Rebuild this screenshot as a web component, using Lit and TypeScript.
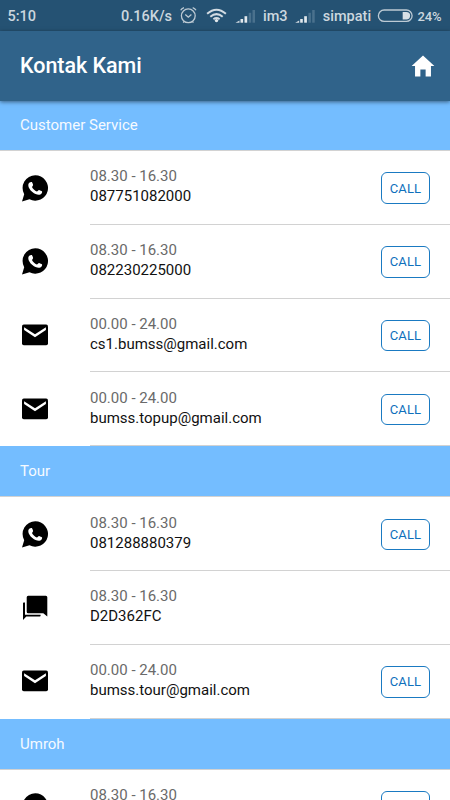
import { LitElement, html, css, svg } from "lit";
import { customElement, property } from "lit/decorators.js";

type Kind = "whatsapp" | "mail" | "chat";
interface Contact { kind: Kind; hours: string; value: string; call: boolean; }
interface Section { title: string; items: Contact[]; }

const entry = (kind: Kind, hours: string, value: string, call = true): Contact => ({ kind, hours, value, call });

const SECTIONS: Section[] = [
  {
    title: "Customer Service",
    items: [
      entry("whatsapp", "08.30 - 16.30", "087751082000"),
      entry("whatsapp", "08.30 - 16.30", "082230225000"),
      entry("mail", "00.00 - 24.00", "cs1.bumss@gmail.com"),
      entry("mail", "00.00 - 24.00", "bumss.topup@gmail.com"),
    ],
  },
  {
    title: "Tour",
    items: [
      entry("whatsapp", "08.30 - 16.30", "081288880379"),
      entry("chat", "08.30 - 16.30", "D2D362FC", false),
      entry("mail", "00.00 - 24.00", "bumss.tour@gmail.com"),
    ],
  },
  { title: "Umroh", items: [entry("whatsapp", "08.30 - 16.30", "")] },
];

const GLYPHS = {
  whatsapp: svg`
    <path d="M15.3 2.3A12.7 12.7 0 0 0 4.2 21.2L2 28.6L9.5 26.3A12.7 12.7 0 1 0 15.3 2.3Z"/>
    <path fill="#fff" d="M9.6 9.6C10.3 8.9 11.4 8.7 11.9 9.1C12.4 9.8 13 11.3 13.1 12C13.1 12.8 12 13.6 12 14.1C12.5 15.7 14.9 17.8 16.8 18.6C17.5 18.7 18.3 17.1 19 17.1C19.7 17.2 21.7 18.2 22.1 18.6C22.4 19.6 21.4 21.1 20.3 21.6C18.1 22.4 15 21.3 12.4 19.1C9.8 16.8 8.3 14.3 8.3 12.2C8.3 11.1 8.9 10.2 9.6 9.6Z"/>`,
  mail: svg`
    <rect x="2" y="4.6" width="26" height="20.7" rx="1.8"/>
    <path fill="#fff" d="M4.1 7.3L15 14.300L25.900 7.300V9.900L15 17.200L4.100 9.900Z"/>`,
  chat: svg`
    <path d="M8.200 2.800H25.800A1.500 1.500 0 0 1 27.300 4.300V23.500L23.300 20.300H8.200A1.500 1.500 0 0 1 6.700 18.800V4.300A1.500 1.500 0 0 1 8.200 2.800Z"/>
    <path d="M3 10Q3 9.500 3.700 9.500H5V21.800H20.600V22.600Q20.600 23.500 19.800 23.500H6.300L3 27Z"/>`,
};

@customElement("contact-row")
export class ContactRow extends LitElement {
  @property({ attribute: false }) contact!: Contact;

  static styles = css`
    :host { display: flex; height: 73.75px; box-sizing: border-box; background: #fff; }
    .media { width: 90px; padding: 21.500px 0 0 20px; box-sizing: border-box; flex: none; }
    .glyph { width: 30px; height: 30px; display: block; }
    .body { flex: 1; display: flex; justify-content: space-between; box-sizing: border-box; border-bottom: 1px solid #d2d2d2; padding-right: 20px; }
    .texts { padding-top: 15.250px; font-size: 15px; line-height: 20px; color: #111; }
    .hours { color: #6a6a6a; }
    .call { margin: 21.300px 0 0; width: 49px; height: 31.500px; box-sizing: border-box; border: 1px solid #1a7ac2; border-radius: 6px; background: transparent; padding: 0; font: 400 13px/29px Roboto, sans-serif; letter-spacing: 0.150px; color: #0f70bc; text-align: center; }
  `;

  render() {
    const c = this.contact;
    return html`
      <div class="media"><svg class="glyph" viewBox="0 0 30 30">${GLYPHS[c.kind]}</svg></div>
      <div class="body">
        <div class="texts"><div class="hours">${c.hours}</div><div>${c.value}</div></div>
        ${c.call ? html`<button class="call">CALL</button>` : null}
      </div>`;
  }
}

const signal = (x: number) => svg`
  <g transform="translate(${x} 0)">
    <path fill="#d3dce3" d="M0 22.700L4 20.600V22.700Z"/>
    <rect x="5" y="19" width="2.600" height="3.700" fill="#e1e8ed"/>
    <rect x="9" y="16.200" width="2.700" height="6.500" fill="#e1e8ed"/>
    <rect x="13.200" y="12.800" width="2.500" height="9.900" fill="#4a718d"/>
    <rect x="17" y="10" width="2.500" height="12.700" fill="#4a718d"/>
  </g>`;

@customElement("status-bar")
export class StatusBar extends LitElement {
  static styles = css`
    :host { display: flex; justify-content: space-between; height: 31px; background: #255273; color: #ccd7df; font: 500 14.500px/33px Roboto, sans-serif; padding-left: 7.500px; }
    .right { display: grid; grid-template-columns: 58.500px 83.500px 59.800px 94.800px 32.400px; }
    .pic { display: block; height: 31px; flex: none; }
    .carrier { display: flex; }
    .level { font-size: 13px; letter-spacing: -0.150px; }
  `;

  render() {
    return html`
      <span>5:10</span>
      <div class="right">
        <span>0.16K/s</span>
        <svg class="pic" width="83" viewBox="180 0 83 31">
          <g fill="none" stroke="#bdcad4" stroke-width="1.300">
            <circle cx="188.300" cy="15.800" r="6.900"/>
            <path d="M185.300 14.500L188.300 17.200L191.400 14.500M180.700 10.300Q181.600 8.400 184 7.600M192.700 7.600Q195 8.400 196 10.300M184.300 21.300L183.200 22.700M192.300 21.300L193.400 22.700"/>
          </g>
          <g fill="none" stroke="#d3dce3" stroke-width="2">
            <path d="M207.100 13.800Q216.500 5.600 225.900 13.800M210.300 16.700Q216.500 11.500 222.700 16.700M213.400 19.200Q216.500 17 219.600 19.200"/>
          </g>
          <circle cx="216.500" cy="20.600" r="1.700" fill="#e1e8ed"/>
          ${signal(235.5)}
        </svg>
        <span class="carrier"><span>im3</span><svg class="pic" width="34" viewBox="288.300 0 34 31">${signal(295.5)}</svg></span>
        <span class="carrier"><span>simpati</span><svg class="pic" width="44" viewBox="371.300 0 44 31">
          <rect x="378.700" y="10" width="33.700" height="11.400" rx="5.700" fill="none" stroke="#bdcad4" stroke-width="1.300"/>
          <path d="M403 12H406.700A3.700 3.700 0 0 1 406.700 19.400H403Z" fill="#d8e0e6"/>
        </svg></span>
        <span class="level">24%</span>
      </div>`;
  }
}

@customElement("app-root")
export class AppRoot extends LitElement {
  static styles = css`
    :host { display: flex; flex-direction: column; height: 800px; overflow: hidden; background: #fff; font-family: Roboto, sans-serif; }
    .bar { position: relative; z-index: 1; flex: none; height: 70px; box-sizing: border-box; background: #30638a; display: flex; align-items: center; justify-content: space-between; padding: 0 13px 0 20px; box-shadow: 0 1px 4px rgba(0, 0, 0, 0.5); }
    .title { margin: 0; font-size: 21.500px; letter-spacing: -0.050px; line-height: 26px; font-weight: 500; color: #fff; }
    .home { width: 28px; height: 28px; fill: #fff; }
    .list { flex: 1; min-height: 0; overflow: hidden; }
    .section { display: flex; flex-direction: column; }
    .heading { margin: 0; height: 50.200px; flex: none; box-sizing: border-box; padding-left: 20px; border-bottom: 1px solid #d2d2d2; background: #74bdff; color: #f6faff; font-size: 15px; font-weight: 400; line-height: 49px; }
    .section + .section .heading { height: 51.200px; line-height: 50px; }
  `;

  render() {
    return html`
      <status-bar></status-bar>
      <header class="bar">
        <h1 class="title">Kontak Kami</h1>
        <svg class="home" viewBox="0 0 512 512"><path d="M208 448V320h96v128h97.600V256H464L256 64 48 256h62.400v192z"/></svg>
      </header>
      <main class="list">
        ${SECTIONS.map((s) => html`
          <section class="section">
            <h2 class="heading">${s.title}</h2>
            ${s.items.map((c) => html`<contact-row .contact=${c}></contact-row>`)}
          </section>`)}
      </main>`;
  }
}
